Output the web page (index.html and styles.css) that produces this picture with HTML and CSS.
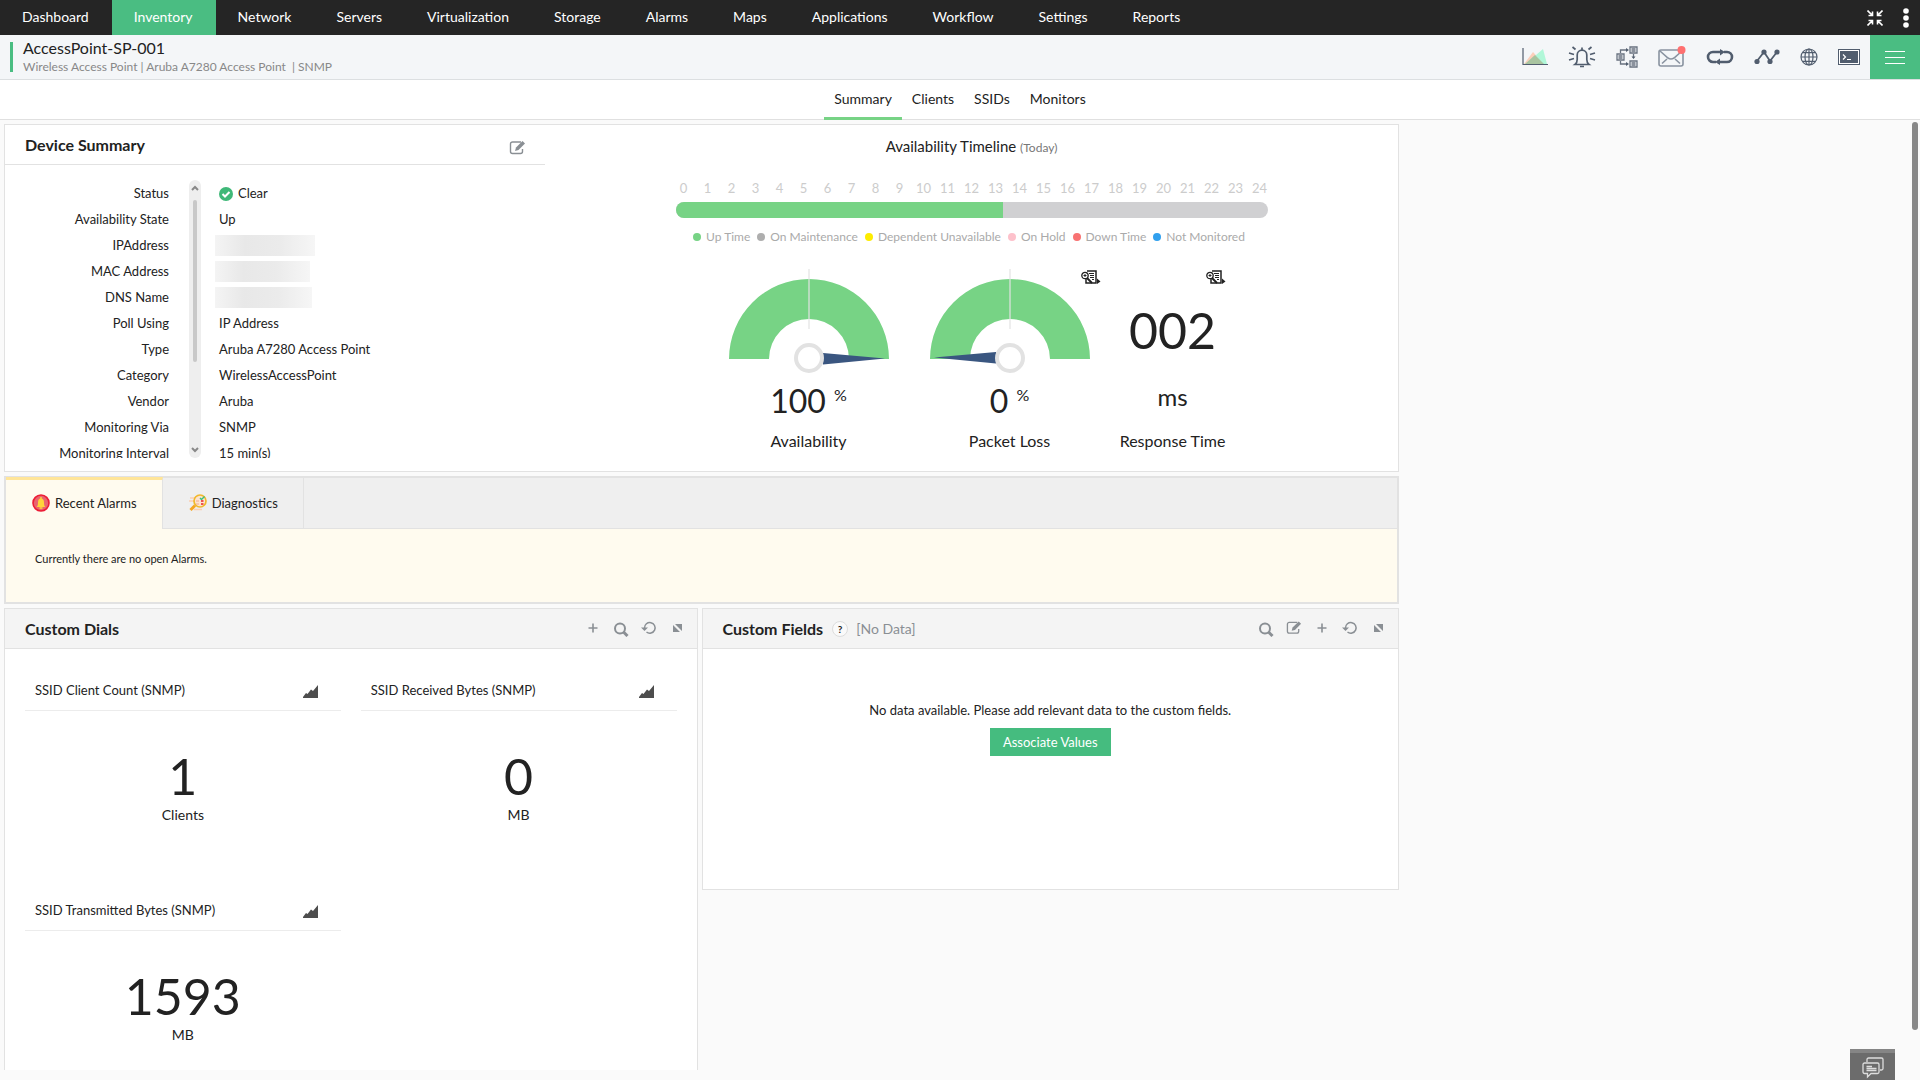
FILE: index.html
```html
<!DOCTYPE html>
<html lang="en">
<head>
    <meta charset="UTF-8">
    <meta name="viewport" content="width=device-width, initial-scale=1.0">
    <title>AccessPoint-SP-001</title>
    <link rel="stylesheet" href="styles.css">
</head>
<body>
    <!-- shared icons -->
    <svg class="sprite" width="0" height="0" aria-hidden="true">
        <symbol id="i-plus" viewBox="0 0 16 16"><path d="M8 3.500v9M3.500 8h9" stroke="currentColor" stroke-width="1.600"/></symbol>
        <symbol id="i-search" viewBox="0 0 16 16"><circle cx="7" cy="7.500" r="5" fill="none" stroke="currentColor" stroke-width="2"/><path d="M10.500 11l4 4" stroke="currentColor" stroke-width="3"/></symbol>
        <symbol id="i-refresh" viewBox="0 0 16 16"><path d="M3.500 8a5.300 5.300 0 1 1 2 4" fill="none" stroke="currentColor" stroke-width="1.500"/><path d="M0 7.500h7L3.500 11z" fill="currentColor"/></symbol>
        <symbol id="i-expand" viewBox="0 0 16 16"><path d="M6 4h7v7zM4 5v7h7z" fill="currentColor"/></symbol>
        <symbol id="i-edit" viewBox="0 0 17 16"><path d="M12 2H3.500A2 2 0 0 0 1.500 4v7.500a2 2 0 0 0 2 2h8a2 2 0 0 0 2-2V9" fill="none" stroke="currentColor" stroke-width="1.400"/><path d="M6 11l1-3.500L13.500 1 16 3.500 9.500 10z" fill="currentColor"/></symbol>
        <symbol id="i-area" viewBox="0 0 16 14"><path d="M0 13v-1l3-4 1.500 1L8 4.500l2 1.500L15 0v13z" fill="#4d4d4d"/></symbol>
        <symbol id="i-report" viewBox="0 0 20 14"><path d="M6 1h9v12H5V9" fill="#fff" stroke="#222" stroke-width="1.500"/><path d="M8 3.500h5M9 5.500h4M9 7.500h4M11 9.500h2" stroke="#222"/><circle cx="4" cy="5.500" r="3.200" fill="#fff" stroke="#222" stroke-width="1.300"/><path d="M2.500 5.500h3M4 4v3" stroke="#222"/><path d="M6 8l5 5" stroke="#222" stroke-width="2"/><path d="M16 8.500l3.500 3-3.500 2.500z" fill="#222"/></symbol>
    </svg>

    <nav class="topnav">
        <a href="#">Dashboard</a>
        <a href="#" class="active">Inventory</a>
        <a href="#">Network</a>
        <a href="#">Servers</a>
        <a href="#">Virtualization</a>
        <a href="#">Storage</a>
        <a href="#">Alarms</a>
        <a href="#">Maps</a>
        <a href="#">Applications</a>
        <a href="#">Workflow</a>
        <a href="#">Settings</a>
        <a href="#">Reports</a>
        <div class="topnav-tools">
            <button type="button" aria-label="Exit full screen">
                <svg width="16" height="16" viewBox="0 0 16 16" fill="none" stroke="#fff" stroke-width="1.600"><path d="M.5.5L5 5M1.500 5.500h4v-4M15.500.5L11 5M14.500 5.500h-4v-4M.5 15.500L5 11M1.500 10.500h4v4M15.500 15.500L11 11M14.500 10.500h-4v4"/></svg>
            </button>
            <button type="button" aria-label="More">
                <svg width="6" height="20" viewBox="0 0 6 20" fill="#fff"><circle cx="3" cy="3" r="2.800"/><circle cx="3" cy="10" r="2.800"/><circle cx="3" cy="17" r="2.800"/></svg>
            </button>
        </div>
    </nav>

    <header class="device-bar">
        <div class="device-name">
            <h1>AccessPoint-SP-001</h1>
            <p>Wireless Access Point | Aruba A7280 Access Point &nbsp;| SNMP</p>
        </div>
        <div class="device-tools">
            <button type="button" aria-label="Graphs">
                <svg width="26" height="18" viewBox="0 0 26 18"><path d="M2 16L11 4l11 12z" fill="#fcd0bb"/><path d="M3 16l11-9 7-6 4 15z" fill="#b0f7d8"/><path d="M3 16l10-9 9 9z" fill="#a9c4a0"/><path d="M1 0v16.500h25" fill="none" stroke="#515d6e" stroke-width="1.200"/></svg>
            </button>
            <button type="button" aria-label="Alarms">
                <svg width="28" height="22" viewBox="0 0 28 22" fill="none" stroke="#515d6e" stroke-width="1.700"><path d="M14 1.500v2M7 18.500c2-1.500 2.200-3 2.200-5V9a4.800 4.800 0 0 1 9.600 0v4.500c0 2 .2 3.500 2.200 5zM12 20.500h4M4.500 1l3 2.500M23.500 1l-3 2.500M1 7l5 1.500M27 7l-5 1.500M1 14l5-1.500M27 14l-5-1.500"/></svg>
            </button>
            <button type="button" aria-label="Workflow">
                <svg width="22" height="22" viewBox="0 0 22 22" fill="none" stroke="#68727f" stroke-width="1.300"><path d="M1 8h7v6H1zM2.500 10h4M2.500 12h4M14 1h7v6h-7zM15.500 3h4M15.500 5h4M14 15h7v6h-7zM15.500 17h4M15.500 19h4M4.500 7V4H11M4.500 15v3H11M17.500 8v4"/><path d="M10 2l3 2-3 2zM10 16l3 2-3 2zM15.500 10.500h4l-2 2.500z" fill="#515d6e" stroke="none"/></svg>
            </button>
            <button type="button" aria-label="Mail">
                <svg width="28" height="22" viewBox="0 0 28 22" fill="none" stroke="#8993a0" stroke-width="1.600"><rect x="1" y="4" width="24" height="16" rx="2"/><path d="M2 5l8 7q3 2 6 0l8-7M4 17.500l5-4.500M22 17.500L17 13"/><circle cx="23.500" cy="4" r="4" fill="#ff7070" stroke="none"/></svg>
            </button>
            <button type="button" aria-label="Loop">
                <svg width="28" height="16" viewBox="0 0 28 16" fill="none" stroke="#515d6e" stroke-width="2.600"><path d="M10 13H7A5 5 0 0 1 7 3h9M18 3h3a5 5 0 0 1 0 10h-9"/><path d="M14 0l5 3-5 3.500zM14 9.500L9 13l5 3z" fill="#515d6e" stroke="none"/></svg>
            </button>
            <button type="button" aria-label="Performance">
                <svg width="26" height="16" viewBox="0 0 26 16" fill="#515d6e"><path d="M3 12L10 3l6 9 7-9" fill="none" stroke="#515d6e" stroke-width="1.800"/><circle cx="3" cy="12.500" r="2.600"/><circle cx="10" cy="3" r="2.600"/><circle cx="16" cy="12.500" r="2.600"/><circle cx="23" cy="3" r="2.600"/></svg>
            </button>
            <button type="button" aria-label="Browser">
                <svg width="18" height="18" viewBox="0 0 18 18" fill="none" stroke="#515d6e" stroke-width="1.200"><circle cx="9" cy="9" r="8"/><ellipse cx="9" cy="9" rx="4" ry="8"/><path d="M9 1v16M1 9h16M2.500 4.700h13M2.500 13.300h13"/></svg>
            </button>
            <button type="button" aria-label="Terminal">
                <svg width="22" height="16" viewBox="0 0 22 16"><rect x=".5" y=".5" width="21" height="15" fill="#fff" stroke="#515d6e"/><rect x="2" y="2" width="18" height="12" fill="#515d6e"/><path d="M5 5.500L7.500 8 5 10.500M9 10.500h4" fill="none" stroke="#fff" stroke-width="1.200"/></svg>
            </button>
            <button type="button" class="menu-btn" aria-label="Menu">
                <svg width="20" height="14" viewBox="0 0 20 14" stroke="#fff"><path d="M0 1.500h20M0 7.500h20M0 13.500h20"/></svg>
            </button>
        </div>
    </header>

    <nav class="tabs">
        <a href="#" class="active">Summary</a>
        <a href="#">Clients</a>
        <a href="#">SSIDs</a>
        <a href="#">Monitors</a>
    </nav>

    <main class="page">
        <div class="content">
            <section class="card summary">
                <div class="details">
                    <div class="details-head">
                        <h2>Device Summary</h2>
                        <button type="button" aria-label="Edit"><svg width="17" height="16"><use href="#i-edit"/></svg></button>
                    </div>
                    <div class="details-list">
                        <table>
                            <tr><th>Status</th><td><svg class="ok" width="14" height="14" viewBox="0 0 14 14"><circle cx="7" cy="7" r="7" fill="#3fb878"/><path d="M3.500 7l2.500 2.500L10.500 5" fill="none" stroke="#fff" stroke-width="2"/></svg>Clear</td></tr>
                            <tr><th>Availability State</th><td>Up</td></tr>
                            <tr><th>IPAddress</th><td><span class="hidden-value ip"></span></td></tr>
                            <tr><th>MAC Address</th><td><span class="hidden-value mac"></span></td></tr>
                            <tr><th>DNS Name</th><td><span class="hidden-value dns"></span></td></tr>
                            <tr><th>Poll Using</th><td>IP Address</td></tr>
                            <tr><th>Type</th><td>Aruba A7280 Access Point</td></tr>
                            <tr><th>Category</th><td>WirelessAccessPoint</td></tr>
                            <tr><th>Vendor</th><td>Aruba</td></tr>
                            <tr><th>Monitoring Via</th><td>SNMP</td></tr>
                            <tr><th>Monitoring Interval</th><td>15 min(s)</td></tr>
                        </table>
                        <div class="list-scroll">
                            <svg width="8" height="6" viewBox="0 0 8 6"><path d="M1 5l3-3 3 3" fill="none" stroke="#888" stroke-width="2"/></svg>
                            <span class="list-thumb"></span>
                            <svg width="8" height="6" viewBox="0 0 8 6"><path d="M1 1l3 3 3-3" fill="none" stroke="#888" stroke-width="2"/></svg>
                        </div>
                    </div>
                </div>

                <div class="availability">
                    <h3>Availability Timeline <small>(Today)</small></h3>
                    <div class="hours">
                        <span>0</span><span>1</span><span>2</span><span>3</span><span>4</span><span>5</span><span>6</span><span>7</span><span>8</span><span>9</span><span>10</span><span>11</span><span>12</span><span>13</span><span>14</span><span>15</span><span>16</span><span>17</span><span>18</span><span>19</span><span>20</span><span>21</span><span>22</span><span>23</span><span>24</span>
                    </div>
                    <div class="timeline"><div class="uptime" style="width: 55.4%"></div></div>
                    <ul class="legend">
                        <li class="up">Up Time</li>
                        <li class="maint">On Maintenance</li>
                        <li class="dep">Dependent Unavailable</li>
                        <li class="hold">On Hold</li>
                        <li class="down">Down Time</li>
                        <li class="none">Not Monitored</li>
                    </ul>
                    <div class="gauges">
                        <div class="gauge">
                            <svg width="180" height="110" viewBox="0 0 180 110">
                                <path d="M10 93a80 80 0 0 1 160 0h-40a40 40 0 0 0-80 0z" fill="#77d385"/>
                                <path d="M90 3v60" stroke="#e2e2e2" stroke-opacity=".6" stroke-width="2"/>
                                <path d="M104 87l62 5.500-62 6z" fill="#3a5680"/>
                                <circle cx="90" cy="92" r="13" fill="#fff" stroke="#e2e2e2" stroke-width="4"/>
                            </svg>
                            <p class="value">100 <sup>%</sup></p>
                            <p class="label">Availability</p>
                        </div>
                        <div class="gauge">
                            <svg width="180" height="110" viewBox="0 0 180 110">
                                <path d="M10 93a80 80 0 0 1 160 0h-40a40 40 0 0 0-80 0z" fill="#77d385"/>
                                <path d="M90 3v60" stroke="#e2e2e2" stroke-opacity=".6" stroke-width="2"/>
                                <path d="M76 86l-62 5.500 62 6z" fill="#3a5680"/>
                                <circle cx="90" cy="92" r="13" fill="#fff" stroke="#e2e2e2" stroke-width="4"/>
                            </svg>
                            <p class="value">0 <sup>%</sup></p>
                            <p class="label">Packet Loss</p>
                            <button type="button" class="report" aria-label="Packet loss report"><svg width="20" height="14"><use href="#i-report"/></svg></button>
                        </div>
                        <div class="gauge response">
                            <p class="number">002</p>
                            <p class="unit">ms</p>
                            <p class="label">Response Time</p>
                            <button type="button" class="report" aria-label="Response time report"><svg width="20" height="14"><use href="#i-report"/></svg></button>
                        </div>
                    </div>
                </div>
            </section>

            <section class="alarms">
                <div class="alarm-tabs">
                    <button type="button" class="active">
                        <svg width="18" height="18" viewBox="0 0 18 18"><circle cx="9" cy="9" r="8" fill="#e9646f" stroke="#ed1c35" stroke-width="1.600"/><path d="M4.500 13c1.300-1 1.500-2 1.500-4.500C6 6 7 4.500 9 4.500s3 1.500 3 4c0 2.500.2 3.500 1.500 4.500z" fill="#ffd43a"/><path d="M9 3v2M7.500 14h3" stroke="#ffd43a" stroke-width="1.500"/></svg>
                        Recent Alarms
                    </button>
                    <button type="button">
                        <svg width="18" height="18" viewBox="0 0 18 18"><path d="M1 4h7M0 7h6M5 15.500h8" stroke="#fbd0b4" stroke-width="1.500"/><circle cx="11" cy="7" r="6" fill="#fde3cf" stroke="#f0b92c" stroke-width="1.700"/><path d="M11 4l1.500 1.500 3-3" fill="none" stroke="#35c184" stroke-width="1.400"/><path d="M12 7h2.500M12 10h2.500" stroke="#ef5350" stroke-width="1.800"/><path d="M7 7h3M7 10h3" stroke="#f6a98d"/><path d="M6 11.500L1.500 16" stroke="#f5a623" stroke-width="3"/></svg>
                        Diagnostics
                    </button>
                </div>
                <p>Currently there are no open Alarms.</p>
            </section>

            <div class="widgets">
                <section class="card dials">
                    <div class="card-head">
                        <h2>Custom Dials</h2>
                        <div class="card-tools">
                            <button type="button" aria-label="Add"><svg width="16" height="16"><use href="#i-plus"/></svg></button>
                            <button type="button" class="search" aria-label="Search"><svg width="16" height="16"><use href="#i-search"/></svg></button>
                            <button type="button" aria-label="Refresh"><svg width="16" height="16"><use href="#i-refresh"/></svg></button>
                            <button type="button" aria-label="Expand"><svg width="16" height="16"><use href="#i-expand"/></svg></button>
                        </div>
                    </div>
                    <div class="dial-grid">
                        <div class="dial">
                            <h4>SSID Client Count (SNMP)<svg width="16" height="14"><use href="#i-area"/></svg></h4>
                            <p class="number">1</p>
                            <p class="dial-unit">Clients</p>
                        </div>
                        <div class="dial">
                            <h4>SSID Received Bytes (SNMP)<svg width="16" height="14"><use href="#i-area"/></svg></h4>
                            <p class="number">0</p>
                            <p class="dial-unit">MB</p>
                        </div>
                        <div class="dial">
                            <h4>SSID Transmitted Bytes (SNMP)<svg width="16" height="14"><use href="#i-area"/></svg></h4>
                            <p class="number">1593</p>
                            <p class="dial-unit">MB</p>
                        </div>
                    </div>
                </section>

                <section class="card fields">
                    <div class="card-head">
                        <h2>Custom Fields</h2>
                        <button type="button" class="help">?</button>
                        <span class="no-data">[No Data]</span>
                        <div class="card-tools">
                            <button type="button" class="search" aria-label="Search"><svg width="16" height="16"><use href="#i-search"/></svg></button>
                            <button type="button" aria-label="Edit"><svg width="16" height="16"><use href="#i-edit"/></svg></button>
                            <button type="button" aria-label="Add"><svg width="16" height="16"><use href="#i-plus"/></svg></button>
                            <button type="button" aria-label="Refresh"><svg width="16" height="16"><use href="#i-refresh"/></svg></button>
                            <button type="button" aria-label="Expand"><svg width="16" height="16"><use href="#i-expand"/></svg></button>
                        </div>
                    </div>
                    <div class="fields-body">
                        <p>No data available. Please add relevant data to the custom fields.</p>
                        <button type="button" class="primary">Associate Values</button>
                    </div>
                </section>
            </div>
        </div>
        <div class="page-scroll"></div>
    </main>

    <button type="button" class="chat" aria-label="Chat">
        <svg width="22" height="22" viewBox="0 0 22 22" fill="none" stroke="#ddd" stroke-width="1.300"><path d="M5 5V2.500A1.500 1.500 0 0 1 6.500 1h13A1.500 1.500 0 0 1 21 2.500v9a1.500 1.500 0 0 1-1.500 1.500H18"/><path d="M2.500 6h13A1.500 1.500 0 0 1 17 7.500V15a1.500 1.500 0 0 1-1.500 1.500H9L5.500 20v-3.500h-3A1.500 1.500 0 0 1 1 15V7.500A1.500 1.500 0 0 1 2.500 6zM4.500 9.500H10M4.500 11.500h10M4.500 13.500h10"/></svg>
    </button>
</body>
</html>
```
FILE: styles.css
```css
* {
    box-sizing: border-box;
}
body {
    margin: 0;
    height: 100vh;
    display: flex;
    flex-direction: column;
    overflow: hidden;
    font-family: Lato, sans-serif;
    font-size: 14px;
    color: #222;
    background: #fafafa;
}
h1, h2, h3, h4, p, ul {
    margin: 0;
    padding: 0;
}
a {
    color: inherit;
    text-decoration: none;
}
button {
    padding: 0;
    border: 0;
    background: none;
    font: inherit;
    color: inherit;
    cursor: pointer;
}
svg {
    display: block;
}
.sprite {
    position: absolute;
}

/* top navigation */
.topnav {
    display: flex;
    height: 35px;
    flex: none;
    background: #252525;
    color: #fff;
    line-height: 34px;
}
.topnav a {
    padding: 0 23px 0 22px;
}
.topnav .active {
    background: #4abd82;
}
.topnav-tools {
    display: flex;
    align-items: center;
    gap: 20px;
    margin-left: auto;
    padding-right: 11px;
}

/* device header */
.device-bar {
    display: flex;
    height: 45px;
    flex: none;
    justify-content: space-between;
    background: #f4f6f8;
    border-bottom: 1px solid #dcdfe1;
}
.device-name {
    height: 30px;
    margin: 7px 0 0 10px;
    padding-left: 10px;
    border-left: 3px solid #4abd82;
}
.device-name h1 {
    margin-top: -3px;
    font-size: 16px;
    font-weight: normal;
    line-height: 18px;
}
.device-name p {
    font-size: 12px;
    line-height: 20px;
    color: #888;
}
.device-tools {
    display: flex;
    align-items: center;
    gap: 20px;
}
.menu-btn {
    display: flex;
    align-items: center;
    justify-content: center;
    width: 50px;
    height: 44px;
    margin-left: -10px;
    background: #4abd82;
}

/* tabs */
.tabs {
    display: flex;
    flex: none;
    justify-content: center;
    height: 40px;
    background: #fff;
    border-bottom: 1px solid #e0e0e0;
    line-height: 38px;
}
.tabs a {
    height: 40px;
    padding: 0 10px;
}
.tabs .active {
    border-bottom: 3px solid #77d385;
}

/* page */
.page {
    position: relative;
    display: grid;
    grid-template-columns: 35fr 13fr;
    flex: 1;
    min-height: 0;
    margin-bottom: 10px;
}
.content {
    display: flex;
    flex-direction: column;
    gap: 4px;
    min-height: 0;
    padding: 4px 1px 0 4px;
    overflow: hidden;
}
.page-scroll {
    position: absolute;
    top: 2px;
    right: 2px;
    width: 6px;
    height: calc(100% - 42px);
    border-radius: 3px;
    background: #888;
}
.card {
    background: #fff;
    border: 1px solid #e2e2e2;
}
h2 {
    font-size: 16px;
    font-weight: bold;
}

/* device summary */
.summary {
    display: flex;
    flex: none;
    height: 348px;
}
.details {
    width: 540px;
}
.details-head {
    display: flex;
    align-items: center;
    justify-content: space-between;
    height: 40px;
    padding: 0 19px 0 20px;
    border-bottom: 1px solid #e2e2e2;
}
.details-head button {
    margin-top: 6px;
    color: #8a8f94;
}
.details-list {
    position: relative;
    height: 278px;
    margin-top: 15px;
    overflow: hidden;
}
.details-list table {
    width: 100%;
    border-collapse: collapse;
    font-size: 13px;
    line-height: 26px;
}
.details-list th {
    width: 164px;
    padding: 0;
    font-weight: normal;
    text-align: right;
}
.details-list td {
    height: 26px;
    padding: 0 0 0 50px;
}
.ok {
    display: inline-block;
    margin-right: 5px;
    vertical-align: -3px;
}
.hidden-value {
    display: block;
    height: 21px;
    margin-left: -4px;
    background: linear-gradient(90deg, #f4f4f4, #e8e8e8 30%, #ebebeb 65%, #f6f6f6);
}
.ip {
    width: 100px;
}
.mac {
    width: 95px;
}
.dns {
    width: 97px;
}
.list-scroll {
    position: absolute;
    top: 0;
    left: 184px;
    display: flex;
    flex-direction: column;
    align-items: center;
    width: 12px;
    height: 100%;
    padding: 5px 0;
    border-radius: 6px;
    background: #eee;
}
.list-thumb {
    width: 4px;
    height: 162px;
    margin: 9px 0 auto;
    border-radius: 2px;
    background: #c8c8c8;
}

/* availability */
.availability {
    display: flex;
    flex: 1;
    flex-direction: column;
    align-items: center;
    padding-top: 9px;
}
.availability h3 {
    font-size: 15px;
    font-weight: normal;
    line-height: 24px;
}
.availability small {
    font-size: 12px;
    color: #777;
}
.hours {
    display: flex;
    margin: 18px 0 4px;
    font-size: 13px;
    line-height: 20px;
    color: #ccc;
}
.hours span {
    width: 24px;
    text-align: center;
}
.timeline {
    width: 592px;
    height: 16px;
    border-radius: 8px;
    background: #d0d0d2;
    overflow: hidden;
}
.uptime {
    height: 100%;
    background: #77d385;
}
.legend {
    display: flex;
    gap: 7px;
    margin: 9px 0 19px;
    padding-right: 5px;
    font-size: 12px;
    line-height: 20px;
    color: #aaa;
    list-style: none;
}
.legend li {
    display: flex;
    align-items: center;
    gap: 5px;
}
.legend li::before {
    content: "";
    width: 8px;
    height: 8px;
    border-radius: 50%;
    background: #aeaeae;
}
.legend .up::before {
    background: #77d385;
}
.legend .dep::before {
    background: #fdec00;
}
.legend .hold::before {
    background: #fdc1cb;
}
.legend .down::before {
    background: #f87272;
}
.legend .none::before {
    background: #31a0ee;
}
.gauges {
    display: flex;
}
.gauge {
    position: relative;
    width: 201px;
    text-align: center;
}
.gauge > svg {
    margin: auto;
}
.gauge .value {
    font-size: 32px;
    line-height: 50px;
}
.gauge sup {
    font-size: 16px;
    line-height: 0;
}
.gauge .label {
    font-size: 16px;
    line-height: 30px;
}
.response {
    width: 125px;
}
.number {
    font-size: 50px;
    line-height: 60px;
    text-align: center;
}
.response .number {
    height: 110px;
    padding-top: 34px;
}
.response .unit {
    margin-bottom: 8px;
    font-size: 24px;
    line-height: 42px;
}
.report {
    position: absolute;
    top: 4px;
    right: 9px;
}

/* alarms */
.alarms {
    flex: none;
    height: 128px;
    background: #fffbef;
    border: 2px solid #e2e2e2;
}
.alarm-tabs {
    display: flex;
    height: 51px;
    background: #efefef;
    border-bottom: 1px solid #e2e2e2;
}
.alarm-tabs button {
    display: flex;
    align-items: center;
    gap: 5px;
    padding: 0 25px 0 26px;
    border-right: 1px solid #e2e2e2;
    font-size: 13px;
}
.alarm-tabs .active {
    height: 52px;
    margin-top: -1px;
    padding-bottom: 3px;
    border-top: 3px solid #ffe599;
    background: #fffbef;
}
.alarms p {
    padding: 21px 29px;
    font-size: 11px;
    line-height: 18px;
}

/* widgets */
.widgets {
    display: grid;
    grid-template-columns: 694fr 698fr;
    gap: 4px;
    align-items: start;
}
.card-head {
    display: flex;
    align-items: center;
    height: 40px;
    padding: 0 12px 0 20px;
    background: #f4f4f4;
    border-bottom: 1px solid #e2e2e2;
}
.card-tools {
    display: flex;
    align-items: center;
    gap: 12px;
    margin: 0 0 2px auto;
    color: #8a8f94;
}
.card-tools .search {
    padding-top: 3px;
}
.dial-grid {
    display: grid;
    grid-template-columns: 1fr 1fr;
    column-gap: 20px;
    padding: 22px 20px 0;
}
.dial {
    height: 220px;
}
.dial h4 {
    display: flex;
    align-items: center;
    justify-content: space-between;
    height: 40px;
    margin-bottom: 35px;
    padding: 0 22px 2px 10px;
    border-bottom: 1px solid #ececec;
    font-size: 13px;
    font-weight: normal;
}
.dial h4 svg {
    margin-top: 4px;
}
.dial-unit {
    line-height: 18px;
    text-align: center;
}
.help {
    width: 16px;
    height: 16px;
    margin: 0 8px 0 9px;
    border: 1px solid #ddd;
    border-radius: 50%;
    background: #fafafa;
    font-size: 10px;
    font-weight: bold;
    line-height: 14px;
}
.no-data {
    color: #8a8f94;
}
.fields-body {
    height: 240px;
    padding-top: 51px;
    text-align: center;
}
.fields-body p {
    font-size: 13px;
    line-height: 20px;
}
.primary {
    height: 28px;
    margin-top: 8px;
    padding: 0 13px;
    background: #45bc7f;
    color: #fff;
    font-size: 13px;
}

/* chat button */
.chat {
    position: fixed;
    right: 25px;
    bottom: 0;
    display: flex;
    justify-content: center;
    width: 45px;
    height: 31px;
    padding-top: 4px;
    border-top: 4px solid #858585;
    background: #6c6c6c;
}
```
